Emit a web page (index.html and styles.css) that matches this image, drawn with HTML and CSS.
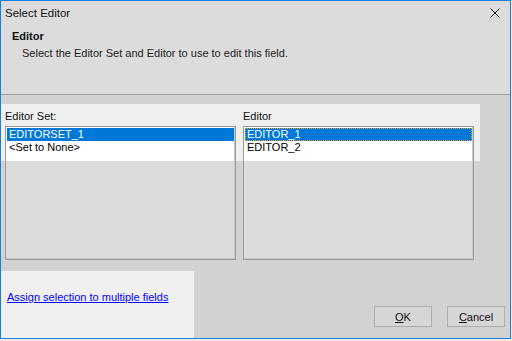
FILE: index.html
```html
<!doctype html>
<html lang="en">
    <head>
        <meta charset="UTF-8" />
        <title>Select Editor</title>
        <link rel="stylesheet" href="styles.css">
    </head>
    <body>
        <div class="window">
            <div class="top">
                <div class="titlebar">
                    <span class="title">Select Editor</span>
                    <svg class="close" width="10" height="10" viewBox="0 0 10 10">
                        <path d="M0.5 0.5 L9.5 9.5 M9.5 0.5 L0.5 9.5" stroke="#1a1a1a" stroke-width="1" fill="none" />
                    </svg>
                </div>
                <div class="header-title">Editor</div>
                <div class="header-desc">Select the Editor Set and Editor to use to edit this field.</div>
            </div>

            <div class="content">
                <div class="column">
                    <div class="label">Editor Set:</div>
                    <div class="listbox">
                        <div class="item selected">EDITORSET_1</div>
                        <div class="item">&lt;Set to None&gt;</div>
                    </div>
                </div>
                <div class="column">
                    <div class="label">Editor</div>
                    <div class="listbox">
                        <div class="item selected focused">EDITOR_1</div>
                        <div class="item">EDITOR_2</div>
                    </div>
                </div>
            </div>

            <div class="footer">
                <div class="footer-left">
                    <a href="#" class="link">Assign selection to multiple fields</a>
                </div>
                <div class="buttons">
                    <button class="btn"><u>O</u>K</button>
                    <button class="btn"><u>C</u>ancel</button>
                </div>
            </div>
        </div>
    </body>
</html>
```

FILE: styles.css
```css
* {
    margin: 0;
    padding: 0;
    box-sizing: border-box;
}

body {
    font-family: "Liberation Sans", Arial, sans-serif;
    font-size: 11px;
    color: #000;
    background: #ececec;
    width: 512px;
    height: 341px;
    overflow: hidden;
}

.window {
    width: 511px;
    height: 339px;
    border: 1px solid #1a7fd4;
    background: #d2d2d2;
    display: flex;
    flex-direction: column;
}

.top {
    height: 94px;
    background: #dcdcdc;
    border-bottom: 1px solid #a0a0a0;
}

.titlebar {
    height: 24px;
    display: flex;
    align-items: center;
    justify-content: space-between;
    padding: 0 10px 0 4px;
}

.title {
    font-size: 11.5px;
    color: #111;
}

.header-title {
    font-weight: bold;
    line-height: 15px;
    margin-top: 4px;
    padding-left: 11px;
    color: #111;
}

.header-desc {
    line-height: 15px;
    margin-top: 2px;
    padding-left: 21px;
    color: #222;
}

.content {
    height: 176px;
    display: grid;
    grid-template-columns: 231px 231px;
    column-gap: 7px;
    padding: 14px 0 0 4px;
    background: linear-gradient(#f0f0f0, #f0f0f0) no-repeat 0 9px / 479px 57px, #d2d2d2;
}

.label {
    line-height: 15px;
    margin-bottom: 2px;
    color: #111;
}

.listbox {
    height: 134px;
    border: 1px solid #9a9a9a;
    box-shadow: inset -1px -1px 0 #c8c8c8;
    padding: 1px;
    background: linear-gradient(#fff 0 34px, #dcdcdc 34px);
}

.item {
    height: 13px;
    line-height: 13px;
    padding-left: 2px;
    white-space: nowrap;
}

.item.selected {
    background: #0078d7;
    color: #fff;
}

.item.focused {
    outline: 1px dotted #f0a030;
    outline-offset: -1px;
}

.footer {
    flex: 1;
    display: flex;
    justify-content: space-between;
}

.footer-left {
    width: 193px;
    background: #f0f0f0;
    padding: 19px 0 0 6px;
}

.link {
    color: #0000ff;
    text-decoration: underline;
    line-height: 15px;
}

.buttons {
    display: flex;
    align-items: flex-end;
    gap: 15px;
    padding: 0 5px 11px 0;
}

.btn {
    width: 58px;
    height: 21px;
    font-family: "Liberation Sans", Arial, sans-serif;
    font-size: 11px;
    background: #d6d6d6;
    border: 1px solid #adadad;
    color: #111;
}

.btn u {
    text-decoration: underline;
}
```
